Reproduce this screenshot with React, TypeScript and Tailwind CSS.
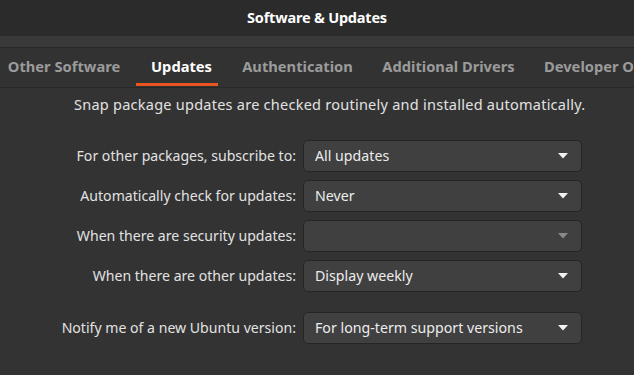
import React from "react";

const font = { fontFamily: '"Noto Sans", "Open Sans", sans-serif' };

function Caret({ dim }: { dim?: boolean }) {
  return (
    <svg width="10" height="6" viewBox="0 0 10 6" className="shrink-0">
      <path d="M0 0 L10 0 L5 5.5 Z" fill={dim ? "#8a8a8a" : "#f2f2f2"} />
    </svg>
  );
}

function Row({ label, value, dim, extra }: { label: string; value: string; dim?: boolean; extra?: string }) {
  return (
    <div className={`flex items-center h-[32px] ${extra ?? ""}`}>
      <div className="w-[297px] text-right pr-[1px] text-[14.1px] text-[#e2e2e2] whitespace-nowrap">
        {label}
      </div>
      <div className="ml-[6px] w-[279px] h-[32px] flex items-center justify-between pl-[11px] pr-[13px] rounded-[5px] bg-[#404040] border border-[#252525] text-[14.2px] text-[#ececec]">
        <span>{value}</span>
        <Caret dim={dim} />
      </div>
    </div>
  );
}

export default function App() {
  const tabs = [
    { t: "Other Software", w: "w-[128px]" },
    { t: "Updates", w: "w-[82px] pl-[9px]", active: true },
    { t: "Authentication", w: "w-[133px] pl-[10px]" },
    { t: "Additional Drivers", w: "w-[153px] pl-[10px]" },
  ];
  return (
    <div className="w-[634px] h-[375px] overflow-hidden bg-[#333333] flex flex-col" style={font}>
      <div className="h-[36px] bg-[#2b2b2b] flex items-center justify-center text-[14.5px] font-bold text-white tracking-[-0.2px]">
        Software &amp; Updates
      </div>
      <div className="h-[11px] bg-[#393939]" />
      <div className="h-[1px] bg-[#272727]" />
      <div className="h-[39px] bg-[#323232] flex gap-[8px] overflow-hidden">
        {tabs.map((tab) => (
          <div
            key={tab.t}
            className={`${tab.w} shrink-0 flex flex-col items-center justify-center relative text-[14.7px] font-bold whitespace-nowrap ${
              tab.active ? "text-white" : "text-[#9b9b9b]"
            }`}
          >
            <span className="mt-[-2px]">{tab.t}</span>
            {tab.active && <div className="absolute left-0 right-0 bottom-[1px] h-[3px] bg-[#e95420]" />}
          </div>
        ))}
        <div className="min-w-0 flex-1 overflow-hidden pl-[16px] flex items-center text-[14.7px] font-bold whitespace-nowrap text-[#9b9b9b]">
          <span className="mt-[-2px]">Developer O</span>
        </div>
      </div>
      <div className="h-[1px] bg-[#282828]" />
      <div className="flex flex-col pt-[7px]">
        <div className="pl-[74px] h-[20px] flex items-center text-[14.5px] text-[#e2e2e2] whitespace-nowrap tracking-[0.25px]">
          Snap package updates are checked routinely and installed automatically.
        </div>
        <div className="flex flex-col gap-[8px] mt-[25px]">
          <Row label="For other packages, subscribe to:" value="All updates" />
          <Row label="Automatically check for updates:" value="Never" />
          <Row label="When there are security updates:" value="" dim />
          <Row label="When there are other updates:" value="Display weekly" />
          <Row label="Notify me of a new Ubuntu version:" value="For long-term support versions" extra="mt-[12px]" />
        </div>
      </div>
    </div>
  );
}
